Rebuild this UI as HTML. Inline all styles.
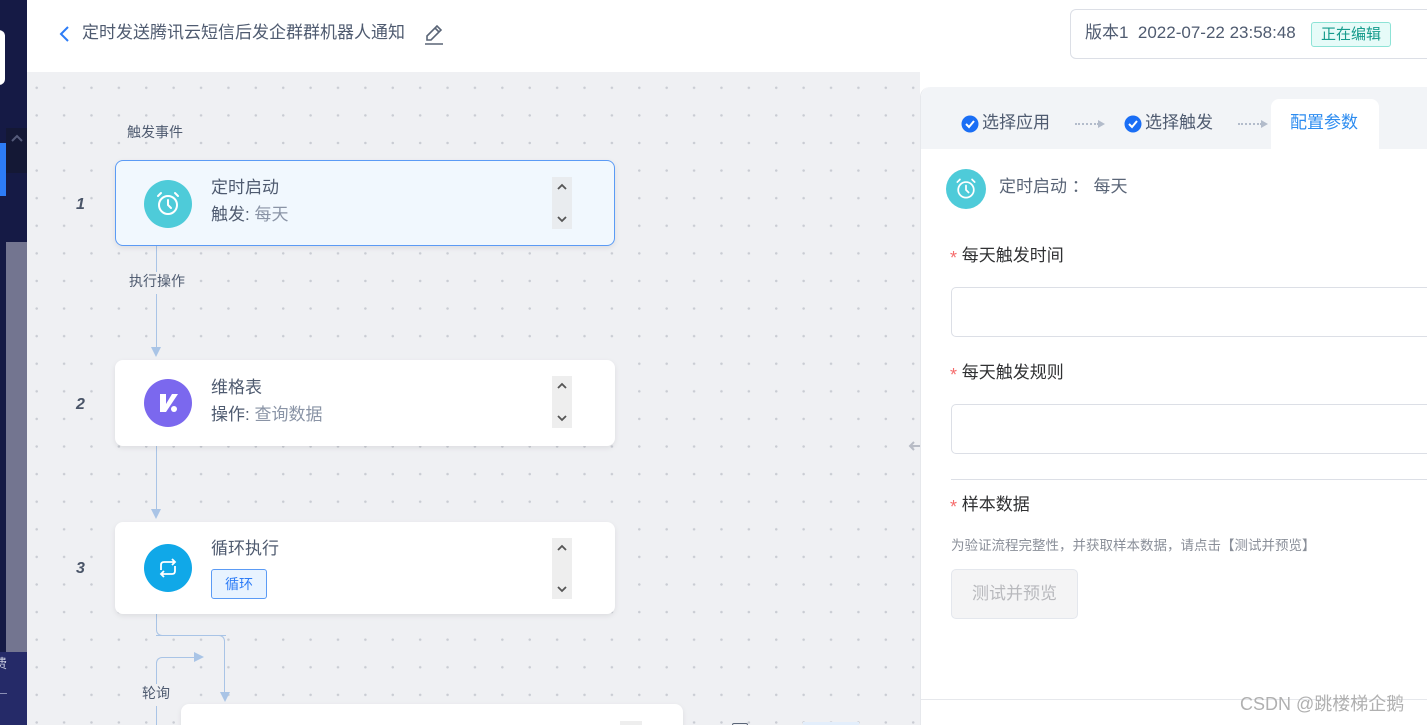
<!DOCTYPE html>
<html><head><meta charset="utf-8"><style>
*{box-sizing:border-box;margin:0;padding:0}
html,body{width:1427px;height:725px;overflow:hidden}
body{position:relative;background:#fff;font-family:"Liberation Sans","Noto Sans CJK SC",sans-serif;color:#5a6577;line-height:1.2}
.abs{position:absolute}
.canvas{left:27px;top:72px;width:893px;height:653px;background-color:#eff0f3;background-image:radial-gradient(circle,#c9ccd3 1.1px,transparent 1.4px);background-size:27.4px 27.6px;background-position:-4px 2px}
.card{background:#fff;border-radius:8px;box-shadow:0 2px 6px rgba(0,0,0,.08)}
.ico{width:48px;height:48px;border-radius:50%;display:flex;align-items:center;justify-content:center}
.num{font-style:italic;font-weight:bold;font-size:16px;color:#4a5568}
.t1{font-size:17px;color:#4f5b70}
.t2{font-size:17px;color:#4f5b70}
.t2 span{color:#8a94a6}
.scr{width:20px;height:52px;background:#eeeeee}
.lbl{font-size:14px;color:#4f5b70}
.line{background:#a9c4e6}
.ast{color:#f56c6c;font-size:18px;vertical-align:-3px}
</style></head><body>
<div class="abs" style="left:0;top:0;width:27px;height:725px;background:#151a45"></div>
<div class="abs" style="left:-10px;top:30px;width:15px;height:55px;background:#fff;border-radius:6px"></div>
<div class="abs" style="left:0;top:143px;width:6px;height:53px;background:#2d7cf6"></div>
<div class="abs" style="left:6px;top:128px;width:21px;height:45px;background:#141835"></div>
<svg class="abs" style="left:10px;top:133px" width="14" height="10"><path d="M2 8 L7 3 L12 8" fill="none" stroke="#555b7a" stroke-width="2"/></svg>
<div class="abs" style="left:6px;top:242px;width:21px;height:410px;background:#737590"></div>
<div class="abs" style="left:0;top:652px;width:27px;height:73px;background:#252a68"></div>
<div class="abs" style="left:-6px;top:656px;color:#c8cbe0;font-size:13px">费</div>
<div class="abs" style="left:0;top:693px;width:7px;height:1px;background:#8a8fb5"></div>

<svg class="abs" style="left:58px;top:25px" width="12" height="18"><path d="M10 2 L3 9 L10 16" fill="none" stroke="#2d7cf6" stroke-width="2"/></svg>
<div class="abs" style="left:82px;top:23px;font-size:17px;color:#4f5b70">定时发送腾讯云短信后发企群群机器人通知</div>
<svg class="abs" style="left:424px;top:24px" width="20" height="22" viewBox="0 0 20 22"><path d="M3 16 L3 12 L13 2 L17 6 L7 16 Z M11 4 L15 8" fill="none" stroke="#5a6577" stroke-width="1.6"/><path d="M1 20 H19" stroke="#5a6577" stroke-width="1.6"/></svg>
<div class="abs" style="left:1070px;top:9px;width:380px;height:50px;border:1px solid #dcdfe6;border-radius:6px"></div>
<div class="abs" style="left:1085px;top:23px;font-size:17px;color:#4f5b70">版本1&nbsp; 2022-07-22 23:58:48</div>
<div class="abs" style="left:1311px;top:22px;width:80px;height:25px;background:#e6fbf8;border:1px solid #8de3d6;border-radius:3px;color:#169b8c;font-size:15px;text-align:center;line-height:23px">正在编辑</div>

<div class="abs canvas"></div>
<div class="abs lbl" style="left:127px;top:124px">触发事件</div>
<div class="abs line" style="left:156px;top:246px;width:1px;height:104px"></div>
<div class="abs" style="left:115px;top:272px;width:80px;height:22px;background:#eff0f3"></div>
<div class="abs lbl" style="left:129px;top:273px">执行操作</div>
<div class="abs" style="left:151px;top:347px;width:0;height:0;border-left:5px solid transparent;border-right:5px solid transparent;border-top:10px solid #a9c4e6"></div>
<div class="abs line" style="left:156px;top:446px;width:1px;height:65px"></div>
<div class="abs" style="left:151px;top:509px;width:0;height:0;border-left:5px solid transparent;border-right:5px solid transparent;border-top:10px solid #a9c4e6"></div>
<div class="abs" style="left:156px;top:614px;width:70px;height:22px;border-left:1px solid #a9c4e6;border-bottom:1px solid #a9c4e6;border-bottom-left-radius:6px"></div>
<div class="abs" style="left:156px;top:635px;width:69px;height:60px;border-top:1px solid #a9c4e6;border-right:1px solid #a9c4e6;border-top-right-radius:6px"></div>
<div class="abs" style="left:220px;top:692px;width:0;height:0;border-left:5px solid transparent;border-right:5px solid transparent;border-top:10px solid #a9c4e6"></div>
<div class="abs" style="left:156px;top:657px;width:40px;height:68px;border-left:1px solid #a9c4e6;border-top:1px solid #a9c4e6;border-top-left-radius:6px"></div>
<div class="abs" style="left:194px;top:652px;width:0;height:0;border-top:5px solid transparent;border-bottom:5px solid transparent;border-left:10px solid #a9c4e6"></div>
<div class="abs" style="left:138px;top:684px;width:38px;height:22px;background:#eff0f3"></div>
<div class="abs lbl" style="left:142px;top:685px">轮询</div>

<div class="abs num" style="left:76px;top:195px">1</div>
<div class="abs num" style="left:76px;top:395px">2</div>
<div class="abs num" style="left:76px;top:559px">3</div>

<div class="abs card" style="left:115px;top:160px;width:500px;height:86px;background:#f1f8fe;border:1px solid #5b9bf5"></div>
<div class="abs ico" style="left:144px;top:180px;background:#4ecbd9"><svg width="30" height="30" viewBox="0 0 30 30" fill="none" stroke="#fff" stroke-width="2" stroke-linecap="round"><circle cx="15" cy="16" r="9"/><path d="M15 11 V16 L18 19 M5 7 L8 4 M25 7 L22 4"/></svg></div>
<div class="abs t1" style="left:211px;top:178px">定时启动</div>
<div class="abs t2" style="left:211px;top:205px">触发: <span>每天</span></div>
<div class="abs scr" style="left:552px;top:177px;background:#e9ecef"><svg width="20" height="52"><path d="M6 12 L10 8 L14 12 M6 40 L10 44 L14 40" fill="none" stroke="#555" stroke-width="1.8"/></svg></div>

<div class="abs card" style="left:115px;top:360px;width:500px;height:86px"></div>
<div class="abs ico" style="left:144px;top:379px;background:#7b68ee"><svg width="30" height="30" viewBox="0 0 30 30"><path d="M7 6 H13 L13 16 L19 6 H25 L13 24 H7 Z" fill="#fff"/><circle cx="21" cy="21" r="3" fill="#fff"/></svg></div>
<div class="abs t1" style="left:211px;top:378px">维格表</div>
<div class="abs t2" style="left:211px;top:405px">操作: <span>查询数据</span></div>
<div class="abs scr" style="left:552px;top:376px"><svg width="20" height="52"><path d="M6 12 L10 8 L14 12 M6 40 L10 44 L14 40" fill="none" stroke="#555" stroke-width="1.8"/></svg></div>

<div class="abs card" style="left:115px;top:522px;width:500px;height:92px"></div>
<div class="abs ico" style="left:144px;top:544px;background:#10a8e8"><svg width="30" height="30" viewBox="0 0 30 30" fill="none" stroke="#fff" stroke-width="1.8"><path d="M8 17 V12 Q8 9 11 9 H22 M19 6 L22 9 L19 12 M22 13 V18 Q22 21 19 21 H8 M11 24 L8 21 L11 18"/></svg></div>
<div class="abs t1" style="left:211px;top:539px">循环执行</div>
<div class="abs" style="left:211px;top:569px;width:56px;height:30px;border:1px solid #5b9bf5;background:#e8f3ff;border-radius:3px;color:#2d7cf6;font-size:14px;text-align:center;line-height:28px">循环</div>
<div class="abs scr" style="left:552px;top:538px;height:61px"><svg width="20" height="61"><path d="M6 12 L10 8 L14 12 M6 49 L10 53 L14 49" fill="none" stroke="#555" stroke-width="1.8"/></svg></div>

<div class="abs card" style="left:181px;top:704px;width:502px;height:40px"></div>
<div class="abs" style="left:620px;top:721px;width:22px;height:10px;background:#eee"></div>
<div class="abs" style="left:732px;top:723px;width:16px;height:10px;border:1px solid #5a6577;border-radius:2px"></div>
<div class="abs" style="left:803px;top:722px;width:56px;height:10px;background:#e3eefb"></div>

<svg class="abs" style="left:908px;top:437px" width="26" height="18"><path d="M2 9 H24 M6 5 L2 9 L6 13 M20 5 L24 9 L20 13 M13 3 V15" fill="none" stroke="#b8bcc6" stroke-width="2"/></svg>

<div class="abs" style="left:920px;top:87px;width:520px;height:640px;background:#fff;border-top-left-radius:10px;border-left:1px solid #e6e8ec"></div>
<div class="abs" style="left:921px;top:87px;width:510px;height:62px;background:#f2f4f7;border-top-left-radius:10px"></div>
<div class="abs" style="left:1271px;top:99px;width:108px;height:52px;background:#fff;border-radius:8px 8px 0 0"></div>
<svg class="abs" style="left:961px;top:115px" width="18" height="18" viewBox="0 0 18 18"><circle cx="9" cy="9" r="8.5" fill="#1a6ef5"/><path d="M5 9 L8 12 L13 6" fill="none" stroke="#fff" stroke-width="2"/></svg>
<div class="abs" style="left:982px;top:113px;font-size:17px;color:#4f5b70">选择应用</div>
<div class="abs" style="left:1075px;top:123px;width:24px;border-top:2px dotted #b3bccb"></div>
<div class="abs" style="left:1098px;top:120px;border-top:4px solid transparent;border-bottom:4px solid transparent;border-left:7px solid #b3bccb"></div>
<svg class="abs" style="left:1124px;top:115px" width="18" height="18" viewBox="0 0 18 18"><circle cx="9" cy="9" r="8.5" fill="#1a6ef5"/><path d="M5 9 L8 12 L13 6" fill="none" stroke="#fff" stroke-width="2"/></svg>
<div class="abs" style="left:1145px;top:113px;font-size:17px;color:#4f5b70">选择触发</div>
<div class="abs" style="left:1238px;top:123px;width:24px;border-top:2px dotted #b3bccb"></div>
<div class="abs" style="left:1261px;top:120px;border-top:4px solid transparent;border-bottom:4px solid transparent;border-left:7px solid #b3bccb"></div>
<div class="abs" style="left:1290px;top:113px;font-size:17px;color:#2d8cf0">配置参数</div>

<div class="abs ico" style="left:946px;top:169px;width:40px;height:40px;background:#4ecbd9"><svg width="26" height="26" viewBox="0 0 30 30" fill="none" stroke="#fff" stroke-width="2" stroke-linecap="round"><circle cx="15" cy="16" r="9"/><path d="M15 11 V16 L18 19 M5 7 L8 4 M25 7 L22 4"/></svg></div>
<div class="abs" style="left:999px;top:177px;font-size:17px;color:#5a6577">定时启动 ： 每天</div>

<div class="abs" style="left:950px;top:246px;font-size:17px;color:#303133"><span class="ast">*</span> 每天触发时间</div>
<div class="abs" style="left:951px;top:287px;width:490px;height:50px;border:1px solid #dcdfe6;border-radius:5px"></div>
<div class="abs" style="left:950px;top:363px;font-size:17px;color:#303133"><span class="ast">*</span> 每天触发规则</div>
<div class="abs" style="left:951px;top:404px;width:490px;height:50px;border:1px solid #dcdfe6;border-radius:5px"></div>
<div class="abs" style="left:951px;top:479px;width:480px;height:1px;background:#dcdfe6"></div>
<div class="abs" style="left:950px;top:495px;font-size:17px;color:#303133"><span class="ast">*</span> 样本数据</div>
<div class="abs" style="left:951px;top:538px;font-size:13.5px;color:#8a8f99">为验证流程完整性，并获取样本数据，请点击【测试并预览】</div>
<div class="abs" style="left:951px;top:569px;width:127px;height:50px;background:#f4f4f5;border:1px solid #e4e7ed;border-radius:5px;color:#b8b9bd;font-size:17px;text-align:center;line-height:48px">测试并预览</div>
<div class="abs" style="left:921px;top:699px;width:510px;height:1px;background:#e6e8ec"></div>
<div class="abs" style="left:1240px;top:694px;font-size:18px;color:#b0b0b0">CSDN @跳楼梯企鹅</div>
</body></html>
